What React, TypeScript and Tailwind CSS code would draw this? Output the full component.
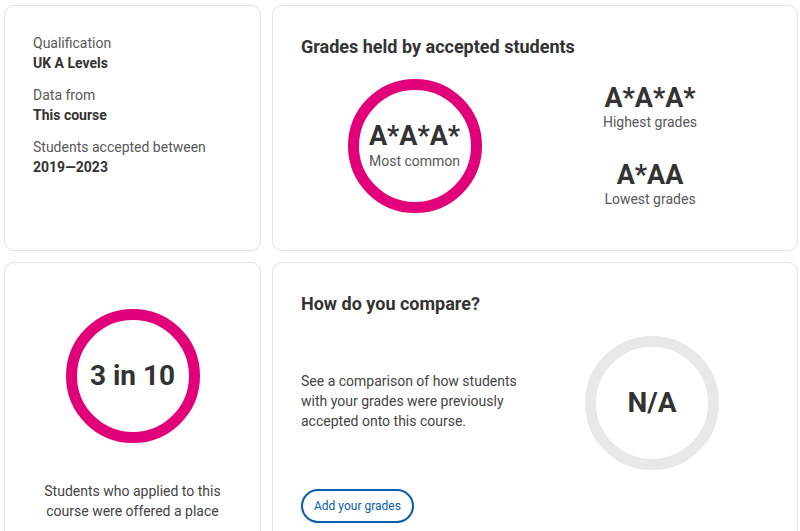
export default function App() {
  return (
    <div
      className="h-[531px] w-[800px] overflow-hidden bg-white text-[#333]"
      style={{ fontFamily: "Roboto, 'Liberation Sans', sans-serif" }}
    >
      <div className="grid grid-cols-[257px_526px] grid-rows-[246px_300px] gap-[11px] pl-[4px] pt-[5px]">
        {/* summary */}
        <div className="rounded-[10px] border border-[#e3e3e3] px-[28px] pt-[28px]">
          <div className="flex flex-col gap-[13px] text-[14px] leading-[19.5px]">
            <div>
              <p className="text-[#585858]">Qualification</p>
              <p className="font-bold text-[#333]">UK A Levels</p>
            </div>
            <div>
              <p className="text-[#585858]">Data from</p>
              <p className="font-bold text-[#333]">This course</p>
            </div>
            <div>
              <p className="text-[#585858]">Students accepted between</p>
              <p className="font-bold text-[#333]">2019—2023</p>
            </div>
          </div>
        </div>

        {/* grades held */}
        <div className="rounded-[10px] border border-[#e3e3e3] px-[28px] pt-[29px]">
          <h2 className="text-[18px] font-bold leading-[24px]">Grades held by accepted students</h2>
          <div className="mt-[20px] grid grid-cols-2">
            <div className="flex justify-center pr-[7px]">
              <div className="flex h-[134px] w-[134px] flex-col items-center justify-center rounded-full border-[11px] border-[#e2007a]">
                <span className="text-[27px] font-bold leading-[30px]">A*A*A*</span>
                <span className="text-[14px] leading-[20px] text-[#585858]">Most common</span>
              </div>
            </div>
            <div className="flex flex-col items-center justify-center gap-[29px] pr-[4px]">
              <div className="flex flex-col items-center">
                <span className="text-[27px] font-bold leading-[29px]">A*A*A*</span>
                <span className="text-[14px] leading-[19px] text-[#585858]">Highest grades</span>
              </div>
              <div className="flex flex-col items-center">
                <span className="text-[27px] font-bold leading-[29px]">A*AA</span>
                <span className="text-[14px] leading-[19px] text-[#585858]">Lowest grades</span>
              </div>
            </div>
          </div>
        </div>

        {/* offer rate */}
        <div className="flex flex-col items-center rounded-[10px] border border-[#e3e3e3] pt-[46px]">
          <div className="flex h-[134px] w-[134px] items-center justify-center rounded-full border-[11px] border-[#e2007a]">
            <span className="text-[28px] font-bold leading-[32px]">3 in 10</span>
          </div>
          <p className="mt-[38px] text-center text-[14px] leading-[20px] text-[#444]">
            Students who applied to this
            <br />
            course were offered a place
          </p>
        </div>

        {/* compare */}
        <div className="rounded-[10px] border border-[#e3e3e3] px-[28px] pt-[29px]">
          <h2 className="text-[18px] font-bold leading-[24px]">How do you compare?</h2>
          <div className="mt-[20px] grid grid-cols-2">
            <div className="flex flex-col items-start">
              <div className="flex h-[134px] items-center pb-[4px]">
                <p className="w-[225px] text-[14px] leading-[20px] text-[#444]">
                  See a comparison of how students with your grades were previously accepted onto this course.
                </p>
              </div>
              <button className="mt-[19px] h-[34px] rounded-full border-2 border-[#0b5cad] px-[11px] text-[12px] text-[#0b5cad]">
                Add your grades
              </button>
            </div>
            <div className="flex justify-center">
              <div className="flex h-[134px] w-[134px] items-center justify-center rounded-full border-[11px] border-[#e8e8e8]">
                <span className="text-[28px] font-bold leading-[32px]">N/A</span>
              </div>
            </div>
          </div>
        </div>
      </div>
    </div>
  )
}
